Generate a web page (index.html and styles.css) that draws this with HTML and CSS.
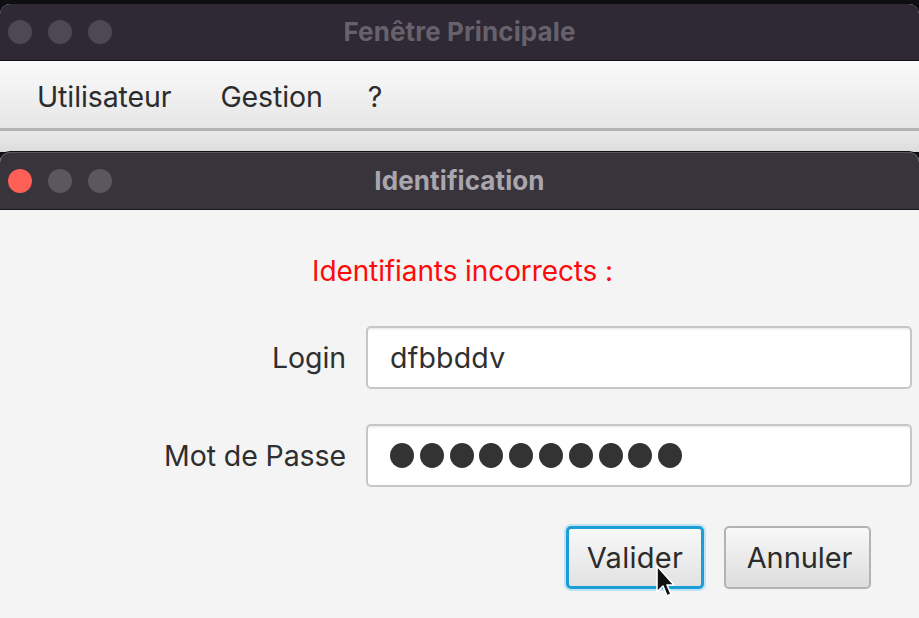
FILE: index.html
```html
<!DOCTYPE html>
<html lang="fr">
<head>
<meta charset="utf-8">
<title>Identification</title>
<link rel="stylesheet" href="styles.css">
</head>
<body>
<div class="desktop">
  <div class="backstrip"></div>
  <div class="main-window">
    <div class="titlebar main-title">
      <div class="lights">
        <span class="light dim"></span>
        <span class="light dim"></span>
        <span class="light dim"></span>
      </div>
      <div class="title">Fenêtre Principale</div>
    </div>
    <div class="menubar">
      <span class="menu-item">Utilisateur</span>
      <span class="menu-item">Gestion</span>
      <span class="menu-item">?</span>
    </div>
    <div class="main-content"></div>
  </div>
  <div class="dialog">
    <div class="titlebar dialog-title">
      <div class="lights">
        <span class="light close"></span>
        <span class="light grey"></span>
        <span class="light grey"></span>
      </div>
      <div class="title">Identification</div>
    </div>
    <div class="dialog-body">
      <div class="error">Identifiants incorrects :</div>
      <div class="form">
        <label class="label">Login</label>
        <div class="field">dfbbddv</div>
        <label class="label">Mot de Passe</label>
        <div class="field dots">
          <span class="dot"></span><span class="dot"></span><span class="dot"></span><span class="dot"></span><span class="dot"></span><span class="dot"></span><span class="dot"></span><span class="dot"></span><span class="dot"></span><span class="dot"></span>
        </div>
      </div>
      <div class="buttons">
        <button class="btn focused">Valider</button>
        <button class="btn">Annuler</button>
      </div>
      <svg class="cursor" width="20" height="36" viewBox="0 0 20 36">
        <path d="M2 1 L2 27 L8 21 L12 31 L16 29 L12 20 L19 20 Z" fill="#111" stroke="#fff" stroke-width="1.6" stroke-linejoin="round"/>
      </svg>
    </div>
  </div>
</div>
</body>
</html>
```
FILE: styles.css
```css
* { box-sizing: border-box; }
html, body { margin: 0; padding: 0; }
body {
  width: 919px;
  height: 618px;
  overflow: hidden;
  background: #0e0e13;
  font-family: "Inter", "Liberation Sans", sans-serif;
}
.desktop {
  display: flex;
  flex-direction: column;
  height: 618px;
}
.backstrip {
  height: 4px;
  background: #0e0e13;
}
.main-window {
  display: flex;
  flex-direction: column;
  background: #e3e3e3;
  border-radius: 10px 10px 0 0;
  overflow: hidden;
}
.titlebar {
  position: relative;
  display: flex;
  align-items: center;
  justify-content: center;
}
.main-title {
  height: 57px;
  background: #2e2934;
  border-bottom: 1px solid #141217;
}
.lights {
  position: absolute;
  left: 8px;
  top: 0;
  bottom: 0;
  display: flex;
  align-items: center;
  gap: 16px;
}
.light {
  width: 24px;
  height: 24px;
  border-radius: 50%;
  background: #4d4953;
}
.light.close { background: #fe5f57; }
.light.grey { background: #5b575e; }
.title {
  font-weight: 700;
  font-size: 26px;
  letter-spacing: 0.1px;
}
.main-title .title { color: #67616c; margin-top: -2px; }
.menubar {
  height: 70px;
  display: flex;
  align-items: center;
  padding-left: 37px;
  padding-top: 3px;
  gap: 49px;
  background: linear-gradient(#fafafa, #f2f2f2 40%, #e6e6e6);
  border-bottom: 3px solid #b4b4b4;
}
.menu-item {
  font-size: 28.5px;
  color: #2c2c2c;
  letter-spacing: -0.1px;
}
.menu-item:last-child { margin-left: -4px; }
.main-content {
  height: 21px;
  background: linear-gradient(#eaeaea, #dcdcdc);
}
.dialog {
  flex: 1;
  display: flex;
  flex-direction: column;
  background: #f4f4f4;
  border-radius: 10px 10px 0 0;
  overflow: hidden;
  margin-top: -1px;
  border-top: 1px solid #121014;
  position: relative;
  background-clip: padding-box;
}
.dialog-title {
  height: 58px;
  background: #38343c;
  border-bottom: 1px solid #17151a;
  border-radius: 10px 10px 0 0;
  box-shadow: inset 0 1px 0 #5a565e;
}
.dialog-title .title { color: #aaa6ae; }
.dialog-body {
  position: relative;
  flex: 1;
  display: flex;
  flex-direction: column;
  padding-top: 43px;
}
.error {
  text-align: center;
  color: #ff0a0a;
  font-size: 28px;
  line-height: 36px;
  letter-spacing: -0.1px;
  padding-left: 6px;
}
.form {
  margin-top: 37px;
  display: grid;
  grid-template-columns: 346px 546px;
  column-gap: 20px;
  row-gap: 35px;
}
.label {
  justify-self: end;
  align-self: center;
  font-size: 28.5px;
  color: #2f2f2f;
  letter-spacing: -0.1px;
}
.field {
  height: 63px;
  background: #fff;
  border: 2px solid #c6c6c6;
  border-radius: 5px;
  display: flex;
  align-items: center;
  padding-left: 22px;
  font-size: 28.5px;
  color: #303030;
  letter-spacing: 0.2px;
  box-shadow: inset 0 3px 3px -2px #e4e4e4;
}
.dots {
  gap: 5.8px;
  padding-left: 22px;
}
.dot {
  width: 24px;
  height: 25px;
  border-radius: 50%;
  background: #333;
}
.buttons {
  margin-top: 39px;
  display: flex;
  justify-content: flex-end;
  gap: 20px;
  padding-right: 48px;
}
.btn {
  height: 63px;
  font-family: inherit;
  font-size: 29px;
  color: #2b2b2b;
  letter-spacing: 0.3px;
  border: 2px solid #b3b3b3;
  border-radius: 5px;
  background: linear-gradient(#f8f8f8, #dddddd);
  padding: 0;
}
.btn:nth-child(2) { width: 147px; letter-spacing: -0.1px; padding-left: 4px; }
.btn.focused {
  width: 138px;
  border: 3px solid #1b9dd8;
  box-shadow: 0 0 0 2px #bfe3f3;
  background: linear-gradient(#f8f8f8, #e2e2e2);
}
.cursor {
  position: absolute;
  left: 655px;
  top: 355px;
}
```
